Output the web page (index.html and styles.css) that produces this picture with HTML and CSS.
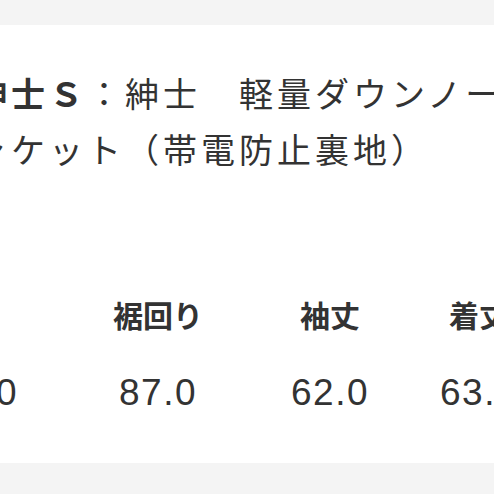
FILE: index.html
```html
<!DOCTYPE html>
<html lang="ja">
<head>
<meta charset="utf-8">
<title>紳士S 軽量ダウンノーカラージャケット</title>
<link rel="stylesheet" href="styles.css">
</head>
<body>
<div class="bar bar-top"></div>
<main class="page">
  <h1 class="title">
    <span class="line"><b class="brand">紳士Ｓ</b>：紳士　軽量ダウンノーカラージ</span>
    <span class="line">ャケット（帯電防止裏地）</span>
  </h1>
  <div class="sizes">
    <div class="cell head">肩幅</div>
    <div class="cell head">裾回り</div>
    <div class="cell head">袖丈</div>
    <div class="cell head">着丈</div>
    <div class="cell val">100.0</div>
    <div class="cell val">87.0</div>
    <div class="cell val">62.0</div>
    <div class="cell val">63.0</div>
  </div>
</main>
<div class="bar bar-bottom"></div>
</body>
</html>
```
FILE: styles.css
```css
html, body {
  margin: 0;
  padding: 0;
  background: #ffffff;
  overflow: hidden;
  width: 494px;
  height: 494px;
}
body {
  font-family: "Noto Sans CJK JP", "Noto Sans", sans-serif;
  color: #333333;
}
.bar {
  background: #f4f4f4;
}
.bar-top {
  height: 25px;
}
.bar-bottom {
  height: 40px;
}
.page {
  overflow: hidden;
}
.title {
  margin: 40px 0 0 -27px;
  font-size: 34px;
  font-weight: 400;
  line-height: 56px;
  letter-spacing: 4px;
  white-space: nowrap;
}
.line {
  display: block;
}
.brand {
  font-weight: 700;
}
.sizes {
  display: grid;
  grid-template-columns: 188px 192px 152px 146px;
  grid-auto-rows: 79px;
  margin: 97px 0 31px -126px;
  white-space: nowrap;
}
.cell {
  display: flex;
  align-items: center;
  justify-content: center;
}
.head {
  font-size: 30px;
  font-weight: 700;
}
.val {
  font-family: "Liberation Sans", Arial, sans-serif;
  font-size: 37px;
  letter-spacing: 1.5px;
}
```
